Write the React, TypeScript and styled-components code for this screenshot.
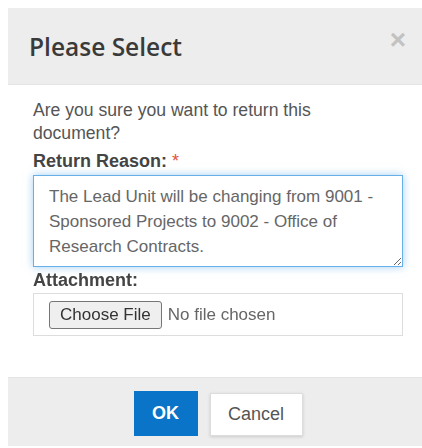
import { useEffect, useRef } from "react";
import styled, { createGlobalStyle } from "styled-components";

const GlobalStyle = createGlobalStyle`
  html, body {
    margin: 0;
    padding: 0;
    background: #fff;
    overflow: hidden;
  }
  body {
    padding: 8px 0 0 8px;
    font-family: "Liberation Sans", Arial, sans-serif;
  }
`;

const REASON =
  "The Lead Unit will be changing from 9001 - Sponsored Projects to 9002 - Office of Research Contracts.";

export default function App() {
  const reasonRef = useRef<HTMLTextAreaElement>(null);

  useEffect(() => {
    const el = reasonRef.current;
    if (el) {
      el.focus();
      el.setSelectionRange(el.value.length, el.value.length);
    }
  }, []);

  return (
    <>
      <GlobalStyle />
      <Modal>
        <Header>
          <Title>Please Select</Title>
          <CloseButton aria-label="Close">×</CloseButton>
        </Header>

        <Body>
          <Question>Are you sure you want to return this document?</Question>
          <FieldLabel $gap={5}>
            Return Reason: <RequiredStar>*</RequiredStar>
          </FieldLabel>
          <ReasonInput ref={reasonRef} defaultValue={REASON} rows={3} />

          <FieldLabel $gap={2}>Attachment:</FieldLabel>
          <FileBox>
            <input type="file" />
          </FileBox>
        </Body>

        <Footer>
          <PrimaryButton>OK</PrimaryButton>
          <SecondaryButton>Cancel</SecondaryButton>
        </Footer>
      </Modal>
    </>
  );
}

const Modal = styled.div`
  width: 420px;
  background: #fff;
  display: flex;
  flex-direction: column;
`;

const Header = styled.div`
  height: 77px;
  background-color: #ededed;
  border-bottom: 1px solid #e4e4e4;
  padding: 0 22px 0 21px;
  display: flex;
  align-items: center;
  justify-content: space-between;
  box-sizing: border-box;
`;

const Title = styled.h4`
  margin: 0;
  font-family: "Open Sans", sans-serif;
  font-size: 24.5px;
  font-weight: 600;
  color: #3a3a3a;
`;

const CloseButton = styled.button`
  all: unset;
  font-family: "Liberation Sans", Arial, sans-serif;
  font-size: 28px;
  font-weight: 700;
  color: #c2c2c2;
  line-height: 1;
  margin-top: -12px;
  cursor: pointer;
`;

const Body = styled.div`
  padding: 14px 25px 41px 25px;
  display: flex;
  flex-direction: column;
`;

const Question = styled.div`
  max-width: 345px;
  font-size: 17.6px;
  line-height: 23px;
  color: #555;
`;

const FieldLabel = styled.label<{ $gap: number }>`
  margin-top: ${(p) => p.$gap}px;
  font-size: 18px;
  line-height: 22px;
  font-weight: 700;
  color: #444;
`;

const RequiredStar = styled.span`
  color: #e0523b;
  font-weight: 400;
`;

const ReasonInput = styled.textarea`
  box-sizing: border-box;
  width: 370px;
  height: 92px;
  margin: 3px 0 0;
  padding: 8px 15px 4px;
  font-family: "Liberation Sans", Arial, sans-serif;
  font-size: 17px;
  line-height: 25px;
  color: #666;
  caret-color: #333;
  border: 1px solid #66afe9;
  border-radius: 0;
  outline: none;
  box-shadow: 0 0 8px rgba(102, 175, 233, 0.6);
  overflow: hidden;
  resize: vertical;
`;

const FileBox = styled.div`
  box-sizing: border-box;
  width: 370px;
  height: 43px;
  margin-top: 2px;
  padding: 0 15px;
  border: 1px solid #ddd;
  display: flex;
  align-items: center;

  input {
    font-family: "Liberation Sans", Arial, sans-serif;
    font-size: 17px;
    color: #666;
  }

  input::file-selector-button {
    font-family: "Liberation Sans", Arial, sans-serif;
    font-size: 17px;
    color: #333;
    padding: 3px 10px;
    margin-right: 6px;
    border: 1px solid #767676;
    border-radius: 3px;
    background: #efefef;
  }
`;

const Footer = styled.div`
  height: 69px;
  background-color: #ededed;
  border-top: 1px solid #e4e4e4;
  display: flex;
  align-items: flex-end;
  justify-content: center;
  gap: 12px;
  box-sizing: border-box;
  padding-bottom: 10px;
`;

const PrimaryButton = styled.button`
  all: unset;
  box-sizing: border-box;
  width: 64px;
  height: 45px;
  background-color: #0a74c8;
  color: #fff;
  font-family: "Liberation Sans", Arial, sans-serif;
  font-size: 18px;
  font-weight: 700;
  display: flex;
  align-items: center;
  justify-content: center;
  cursor: pointer;
`;

const SecondaryButton = styled.button`
  all: unset;
  box-sizing: border-box;
  width: 93px;
  height: 43px;
  background-color: #fff;
  color: #555;
  font-family: "Liberation Sans", Arial, sans-serif;
  font-size: 18px;
  border: 1px solid #ddd;
  box-shadow: 0 1px 3px rgba(0, 0, 0, 0.15);
  display: flex;
  align-items: center;
  justify-content: center;
  cursor: pointer;
`;
